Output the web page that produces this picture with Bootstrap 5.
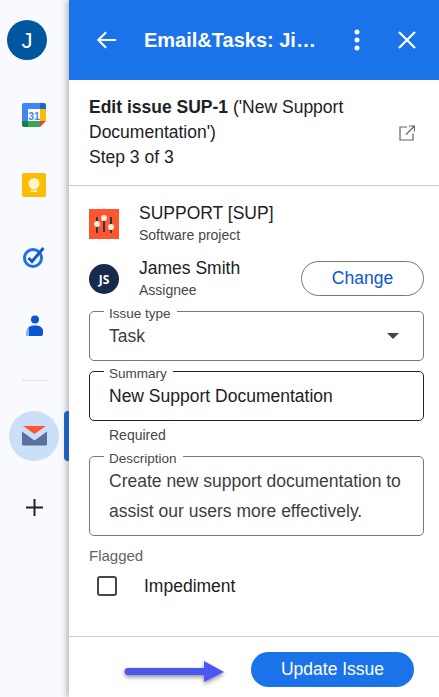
<!DOCTYPE html>
<html lang="en">
<head>
<meta charset="utf-8">
<title>Edit issue</title>
<link href="https://cdn.jsdelivr.net/npm/bootstrap@5.3.0/dist/css/bootstrap.min.css" rel="stylesheet">
<style>
html,body{height:697px;overflow:hidden}
body{font-family:"Liberation Sans",Arial,sans-serif;font-size:17.5px;color:#202124;background:#fff}
.shell{height:697px}
.rail{width:69px;background:#f8faff;flex:none;position:relative}
.ava{width:40px;height:40px;background:#00579f;color:#fff;font-size:22px;margin-top:20px;margin-left:7px}
.rail-ic{margin-left:22px;width:24px;height:24px;display:block}
.ic-cal{margin-top:43px}
.ic-bulb{margin-top:46px}
.ic-task{margin-top:48px}
.ic-user{margin-top:46px}
.rail-sep{width:25px;height:1px;background:#dfe1e5;margin:41px 0 0 22px}
.mail-wrap{margin-top:30px;height:50px;position:relative}
.mail-bub{width:50px;height:50px;background:#cbdff8;margin-left:9px}
.mail-tab{position:absolute;left:64px;top:0;width:5px;height:50px;background:#1a66d8;border-radius:4px 0 0 4px}
.ic-plus{margin:37px 0 0 25px;display:block}
.pane{width:370px;flex:none;box-shadow:-3px 0 5px rgba(60,64,67,.3);background:#fff;position:relative;height:697px}
.topbar{height:80px;background:#1a73e8;color:#fff;padding-left:27px}
.topttl{font-size:20px;font-weight:700;margin-left:26px;width:176px;white-space:nowrap}
.topdots{margin-left:33px;margin-right:37px}
.head-sec{height:106px;padding:15px 24px 0 20px;line-height:25px;border-bottom:1px solid #ccc}
.head-sec b{color:#202124}
.head-ic{margin-top:30px;flex:none}
.sub-sec{padding:17px 15px 0 20px}
.pic{width:30px;height:30px;flex:none}
.who{margin-left:20px}
.who-n{line-height:20px}
.who-s{font-size:14px;color:#444746;line-height:18px;margin-top:3px}
.row-a{height:40px}
.row-b{height:53px;margin-top:15px}
.pic-a{margin-top:6px}
.pic-b{margin-top:6px}
.pill-out{width:123px;height:35px;border:1px solid #747775;border-radius:18px;background:#fff;color:#0b57d0;font-size:17.5px;padding:0;margin-left:auto;margin-top:3px;line-height:1}
.box{margin:0;border:1px solid #79747e;border-radius:5px;padding:0 14px;position:relative}
.box legend{float:none;width:auto;height:1px;margin:0;padding:0 6px 0 5px;font-size:13.5px;line-height:15px;color:#444746}
.box legend span{position:relative;top:-5px;display:block}
.box-val{padding-left:5px}
.b1{height:50px}
.b1 .box-val{color:#3c4043;line-height:20px;padding-top:14px}
.car{width:0;height:0;border-left:6px solid transparent;border-right:6px solid transparent;border-top:6px solid #444;position:absolute;right:24px;top:21px}
.b2{height:50px;margin-top:10px;border-color:#202124}
.b2 .box-val{line-height:20px;padding-top:14px;color:#202124}
.req{font-size:14px;color:#444746;padding-left:20px;line-height:18px;margin-top:5px}
.b3{height:80px;margin-top:12px}
.b3 .box-val{line-height:30px;color:#3c4043;padding-top:9px}
.flg{font-size:15px;color:#5f6368;line-height:18px;margin-top:11px}
.chk-row{margin-top:11px;height:20px}
.chk{width:20px;height:20px;border:2px solid #444746;border-radius:3px;margin-left:8px;flex:none}
.chk-l{margin-left:27px;line-height:20px;color:#202124}
.foot{border-top:1px solid #ccc;height:61px;margin-top:auto;padding:15px 25px 0 55px}
.ic-arrow{overflow:visible;margin-top:9px;flex:none}
.pill-go{width:163px;height:35px;background:#1a73e8;color:#fff;border:0;border-radius:18px;font-size:17.5px;padding:0;margin-left:auto;line-height:1}
</style>
</head>
<body>
<div class="shell d-flex">
  <div class="rail d-flex flex-column">
    <div class="ava rounded-circle d-flex align-items-center justify-content-center">J</div>
    <svg class="rail-ic ic-cal" viewBox="0 0 24 24"><rect x="0" y="0" width="24" height="24" rx="2" fill="#fff"/><path d="M0 18h6v6H2a2 2 0 0 1-2-2z" fill="#188038"/><path d="M6 18h12v6H6z" fill="#34a853"/><path d="M0 6h6v12H0z" fill="#4285f4"/><path d="M2 0h16v6H0V2a2 2 0 0 1 2-2z" fill="#4285f4"/><path d="M18 0h4a2 2 0 0 1 2 2v4h-6z" fill="#1967d2"/><path d="M18 6h6v12h-6z" fill="#fbbc04"/><path d="M18 18h6l-6 6z" fill="#ea4335"/><text x="12" y="16.500" font-size="10.500" font-weight="700" fill="#4285f4" text-anchor="middle" font-family="Liberation Sans">31</text></svg>
    <svg class="rail-ic ic-bulb" viewBox="0 0 24 24"><rect width="24" height="24" rx="2" fill="#fbbc04"/><circle cx="12" cy="10.500" r="5.500" fill="#fff3c4"/><rect x="9" y="14" width="6" height="2.500" fill="#fff3c4"/><rect x="9" y="17.500" width="6" height="1.600" fill="#fff3c4"/></svg>
    <svg class="rail-ic ic-task" viewBox="0 0 24 24"><circle cx="11" cy="13" r="8.500" fill="none" stroke="#1a73e8" stroke-width="3"/><path d="M6.500 13l3.500 3.500L21.500 3" fill="none" stroke="#1a58c8" stroke-width="3"/></svg>
    <svg class="rail-ic ic-user" viewBox="0 0 24 24"><circle cx="13" cy="4.500" r="4" fill="#0b57d0"/><path d="M5 21v-5c0-3.500 3-5.500 8-5.500s8 2 8 5.500v3a2 2 0 0 1-2 2z" fill="#0b57d0"/><path d="M4 21v-5l3-3v8z" fill="#8ab4f8"/></svg>
    <div class="rail-sep"></div>
    <div class="mail-wrap">
      <div class="mail-bub rounded-circle d-flex align-items-center justify-content-center">
        <svg width="25" height="20" viewBox="0 0 25 20"><path d="M0 5.500l12.500 9 12.500-9v12.500a1.500 1.500 0 0 1-1.500 1.500h-22A1.500 1.500 0 0 1 0 18z" fill="#5b6f9c"/><path d="M1 0h23l-11.500 8z" fill="#ff5630"/></svg>
      </div>
      <div class="mail-tab"></div>
    </div>
    <svg class="ic-plus" width="19" height="19" viewBox="0 0 19 19"><path d="M9.500 1v17M1 9.500h17" stroke="#202124" stroke-width="2"/></svg>
  </div>

  <div class="pane d-flex flex-column">
    <div class="topbar d-flex align-items-center">
      <svg width="22" height="22" viewBox="0 0 24 24"><path d="M22 12H3M11 3.500L2.500 12l8.500 8.500" fill="none" stroke="#fff" stroke-width="2.300"/></svg>
      <div class="topttl">Email&amp;Tasks: Ji…</div>
      <svg class="topdots" width="8" height="22" viewBox="0 0 8 22"><circle cx="4" cy="3" r="2.500" fill="#fff"/><circle cx="4" cy="11" r="2.500" fill="#fff"/><circle cx="4" cy="19" r="2.500" fill="#fff"/></svg>
      <svg width="18" height="18" viewBox="0 0 18 18"><path d="M1 1l16 16M17 1L1 17" stroke="#fff" stroke-width="2.200"/></svg>
    </div>

    <div class="head-sec d-flex justify-content-between">
      <div><b>Edit issue SUP-1</b> ('New Support<br>Documentation')<br>Step 3 of 3</div>
      <svg class="head-ic" width="16" height="16" viewBox="0 0 16 16"><path d="M8 2H1v13h13V8.500M7 9.500L15 1.500M10 1h5.500v5.500" fill="none" stroke="#5f6368" stroke-width="1.200"/></svg>
    </div>

    <div class="sub-sec">
      <div class="row-a d-flex align-items-start">
        <svg class="pic pic-a" viewBox="0 0 30 30"><rect width="30" height="30" fill="#ff5630"/><path d="M8 8v16M15 7v16M22 8v16" stroke="#253858" stroke-width="2"/><circle cx="8" cy="15" r="3" fill="#ffecc9"/><circle cx="15" cy="9" r="3" fill="#ffecc9"/><circle cx="22" cy="18" r="3" fill="#ffecc9"/></svg>
        <div class="who"><div class="who-n">SUPPORT [SUP]</div><div class="who-s">Software project</div></div>
      </div>
      <div class="row-b d-flex align-items-start">
        <svg class="pic pic-b" viewBox="0 0 30 30"><circle cx="15" cy="15" r="15" fill="#172b4d"/><text x="15" y="20" font-size="12" font-weight="700" fill="#fff" text-anchor="middle" font-family="Open Sans">JS</text></svg>
        <div class="who"><div class="who-n">James Smith</div><div class="who-s">Assignee</div></div>
        <button type="button" class="btn pill-out">Change</button>
      </div>
      <fieldset class="box b1"><legend><span>Issue type</span></legend><div class="box-val">Task</div><span class="car"></span></fieldset>
      <fieldset class="box b2"><legend><span>Summary</span></legend><div class="box-val">New Support Documentation</div></fieldset>
      <div class="req">Required</div>
      <fieldset class="box b3"><legend><span>Description</span></legend><div class="box-val">Create new support documentation to<br>assist our users more effectively.</div></fieldset>
      <div class="flg">Flagged</div>
      <div class="chk-row d-flex align-items-center"><span class="chk"></span><span class="chk-l">Impediment</span></div>
    </div>

    <div class="foot d-flex align-items-start">
      <svg class="ic-arrow" width="100" height="21" viewBox="0 0 100 21"><defs><filter id="sh" x="-20%" y="-50%" width="140%" height="220%"><feDropShadow dx="0" dy="2" stdDeviation="2" flood-color="#000" flood-opacity=".45"/></filter></defs><path d="M4 7h76V0l20 11-20 10v-7H4a3.500 3.500 0 0 1 0-7z" fill="#4858f0" filter="url(#sh)"/></svg>
      <button type="button" class="btn pill-go">Update Issue</button>
    </div>
  </div>
</div>
<script src="https://cdn.jsdelivr.net/npm/bootstrap@5.3.0/dist/js/bootstrap.bundle.min.js"></script>
</body>
</html>
